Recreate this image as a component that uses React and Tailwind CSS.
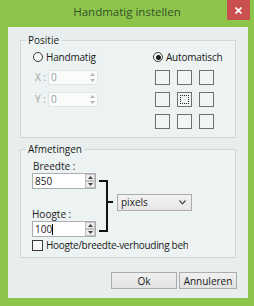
import clsx from 'clsx'

const Arrow = ({ up, color }) => (
  <svg width="5" height="3" viewBox="0 0 5 3">
    <path d={up ? 'M0 3 L2.5 0 L5 3 Z' : 'M0 0 L2.5 3 L5 0 Z'} fill={color} />
  </svg>
)

const Spinner = ({ disabled }) => {
  const color = disabled ? '#b5b5b5' : '#444'
  return (
    <div className="flex flex-col w-[10px] h-full">
      {[true, false].map((up) => (
        <div
          key={up ? 'u' : 'd'}
          className={clsx(
            'flex-1 flex items-center justify-center',
            !disabled && 'border border-[#c2c2c2] bg-[#ededed]'
          )}
        >
          <Arrow up={up} color={color} />
        </div>
      ))}
    </div>
  )
}

const NumInput = ({ value, disabled, caret, className }) => (
  <div
    className={clsx(
      'flex border',
      disabled ? 'border-[#e0e5e5] bg-[#fafcfc] text-[#9a9a9a]' : 'border-[#abadb3] bg-white text-[#1a1a1a]',
      className
    )}
  >
    <div className="flex-1 flex items-center pl-[2px] text-[10px]">
      {value}
      {caret && <span className="w-px h-[11px] bg-black" />}
    </div>
    <Spinner disabled={disabled} />
  </div>
)

const Radio = ({ checked, label }) => (
  <div className="flex items-center gap-[3px] h-[14px]">
    <div className="w-[10px] h-[10px] rounded-full border border-[#3a3a3a] bg-[#f8f8f8] flex items-center justify-center">
      {checked && <div className="w-[5px] h-[5px] rounded-full bg-[#1a1a1a]" />}
    </div>
    <span className="text-[10px] tracking-[-0.2px] text-[#1a1a1a]">{label}</span>
  </div>
)

const Group = ({ title, className, children }) => (
  <fieldset className={clsx('border border-[#cfd7d7] bg-[#ecf3f2] mx-[12px]', className)}>
    <legend className="ml-[5px] px-[2px] text-[10px] leading-[14px] text-[#1a1a1a]">{title}</legend>
    {children}
  </fieldset>
)

const Button = ({ children, className }) => (
  <button
    className={clsx(
      'h-[17px] border border-[#acacac] bg-gradient-to-b from-[#f0f0f0] to-[#e3e3e3] text-[10px] text-[#1a1a1a] leading-none',
      className
    )}
  >
    {children}
  </button>
)

export default function App() {
  return (
    <div className="w-[254px] h-[306px] bg-[#8cc54a] flex flex-col font-['Open_Sans',sans-serif]">
      {/* title bar */}
      <div className="relative h-[27px] flex items-center justify-center pb-[3px]">
        <span className="text-[11.5px] text-[#34502a]">Handmatig instellen</span>
        <div className="absolute right-[4px] top-0 w-[23px] h-[20px] bg-[#c9504f] flex items-center justify-center">
          <svg width="7" height="7" viewBox="0 0 7 7">
            <path d="M0.5 0.5 L6.5 6.5 M6.5 0.5 L0.5 6.5" stroke="#fff" strokeWidth="1.6" />
          </svg>
        </div>
      </div>

      {/* client area */}
      <div className="flex-1 ml-[8px] mr-[6px] mb-[8px] bg-[#e8eeee] flex flex-col pt-[6px]">
        <Group title="Positie" className="h-[105px]">
          <div className="flex pt-[3px]">
            <div className="flex flex-col pl-[12px] w-[132px]">
              <Radio label="Handmatig" />
              <div className="flex items-center mt-[6px]">
                <span className="w-[15px] pl-[2px] text-[10px] text-[#a0a0a0]">X :</span>
                <NumInput value="0" disabled className="w-[50px] h-[15px]" />
              </div>
              <div className="flex items-center mt-[7px]">
                <span className="w-[15px] pl-[2px] text-[10px] text-[#a0a0a0]">Y :</span>
                <NumInput value="0" disabled className="w-[50px] h-[15px]" />
              </div>
            </div>
            <div className="flex flex-col">
              <Radio checked label="Automatisch" />
              <div className="grid grid-cols-3 gap-[7px] w-max ml-[2px] mt-[6px]">
                {Array.from({ length: 9 }).map((_, i) => (
                  <div
                    key={i}
                    className="w-[15px] h-[15px] border border-[#6f6f6f] bg-[#f1f5f5] flex items-center justify-center"
                  >
                    {i === 4 && <div className="w-[9px] h-[9px] border border-dotted border-[#222]" />}
                  </div>
                ))}
              </div>
            </div>
          </div>
        </Group>

        <Group title="Afmetingen" className="h-[116px] mt-[4px]">
          <div className="flex flex-col pl-[11px] pt-[4px]">
            <div className="flex items-start">
              <div className="flex flex-col w-[64px]">
                <span className="leading-[13px] text-[10px] text-[#1a1a1a] pl-[1px]">Breedte :</span>
                <NumInput value="850" className="h-[16px]" />
                <span className="leading-[13px] text-[10px] text-[#1a1a1a] mt-[19px]">Hoogte :</span>
                <NumInput value="100" caret className="h-[16px]" />
              </div>
              <svg width="14" height="52" viewBox="0 0 14 52" className="mt-[20px] ml-[3px]">
                <path d="M0 1 H8 V51 H0 M8 22 H14" stroke="#111" strokeWidth="2" fill="none" />
              </svg>
              <div className="mt-[34px] ml-[4px] w-[75px] h-[17px] border border-[#acacac] bg-gradient-to-b from-[#f3f3f3] to-[#e6e6e6] flex items-center justify-between pl-[3px] pr-[5px]">
                <span className="text-[10px] text-[#1a1a1a]">pixels</span>
                <svg width="7" height="5" viewBox="0 0 7 5">
                  <path d="M0.5 0.5 L3.5 3.8 L6.5 0.5" stroke="#444" strokeWidth="1.2" fill="none" />
                </svg>
              </div>
            </div>
            <div className="flex items-center gap-[3px] h-[14px] mt-[1px]">
              <div className="w-[11px] h-[11px] border border-[#3a3a3a] bg-[#f8f8f8]" />
              <span className="w-[142px] overflow-hidden whitespace-nowrap text-[10px] tracking-[-0.3px] text-[#1a1a1a]">
                Hoogte/breedte-verhouding behouden
              </span>
            </div>
          </div>
        </Group>

        <div className="flex justify-end gap-[2px] pr-[11px] mt-[14px]">
          <Button className="w-[66px]">Ok</Button>
          <Button className="w-[58px]">Annuleren</Button>
        </div>
      </div>
    </div>
  )
}
